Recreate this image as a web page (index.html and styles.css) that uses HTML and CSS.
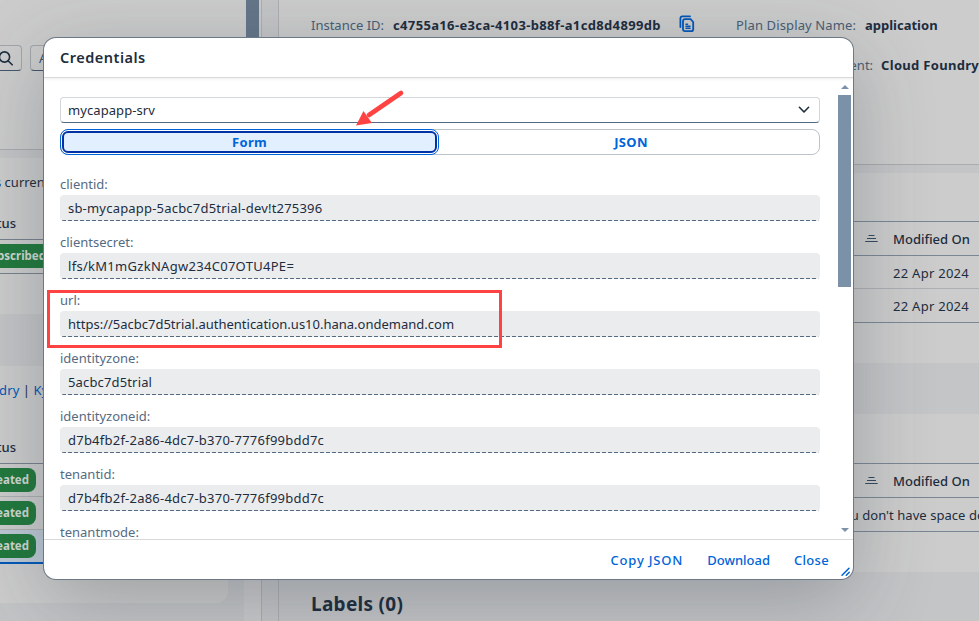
FILE: index.html
```html
<!DOCTYPE html>
<html lang="en">
<head>
<meta charset="utf-8">
<title>Credentials</title>
<link rel="stylesheet" href="styles.css">
</head>
<body>
<div class="app">
  <aside class="list-pane">
    <div class="list-main">
      <div class="filters">
        <div class="search"><svg width="18" height="18" viewBox="0 0 18 18" fill="none" stroke="#1d2d3e" stroke-width="1.6" stroke-linecap="round"><circle cx="7.5" cy="8" r="5.1"/><path d="M11.3 12 15.2 15.8"/></svg></div>
        <div class="filter">All</div>
      </div>
      <section class="list-card subs">
        <p class="info"><span>s currently</span></p>
        <div class="col-head"><span>Status</span></div>
        <div class="sub-row"><span class="tag wide"><b>Subscribed</b></span></div>
      </section>
      <section class="list-card instances">
        <p class="links"><a>Foundry</a> | <a>Kyma</a></p>
        <div class="col-head"><span>Status</span></div>
        <div class="row"><span class="tag"><b>Created</b></span></div>
        <div class="row"><span class="tag"><b>Created</b></span></div>
        <div class="row selected"><span class="tag"><b>Created</b></span></div>
      </section>
    </div>
    <div class="list-track"><div class="list-thumb"></div></div>
  </aside>
  <div class="splitter"></div>
  <main class="detail">
    <header class="detail-head">
      <div class="meta">
        <span class="key k1">Instance ID:</span><strong class="v1">c4755a16-e3ca-4103-b88f-a1cd8d4899db</strong>
        <svg class="copy" width="16" height="18" viewBox="0 0 16 18" fill="none" stroke="#0057b8" stroke-width="1.8" stroke-linecap="round" stroke-linejoin="round"><path d="M1.4 12V3.4q0-2 2-2H11"/><path d="M6 4.2h5.6L14.2 7v7.2q0 2-2 2H6q-2 0-2-2V6.2q0-2 2-2Z"/><path stroke-width="1.5" d="M7 9.2h1.5M7 11.2h4M7 13.3h4"/></svg>
        <span class="key k2">Plan Display Name:</span><strong class="v2">application</strong>
      </div>
      <div class="meta second"><span class="key k3">Environment:</span><strong class="v3">Cloud Foundry</strong></div>
    </header>
    <section class="panel bindings">
      <div class="thead"><svg width="13" height="8" viewBox="0 0 13 8" stroke="#354a5f"><path d="M3.5 .5h6M2 3.5h9M.2 6.5h12.5"/></svg><span>Modified On</span></div>
      <div class="trow"><span>22 Apr 2024</span></div>
      <div class="trow last"><span>22 Apr 2024</span></div>
    </section>
    <section class="panel keys">
      <div class="thead"><svg width="13" height="8" viewBox="0 0 13 8" stroke="#354a5f"><path d="M3.5 .5h6M2 3.5h9M.2 6.5h12.5"/></svg><span>Modified On</span></div>
      <div class="trow empty"><span>You don't have space developer</span></div>
    </section>
    <h2>Labels (0)</h2>
  </main>
</div>

<div class="dialog">
  <header class="title">Credentials</header>
  <div class="body">
    <div class="content">
      <div class="select"><span>mycapapp-srv</span><svg width="12" height="8" viewBox="0 0 12 8" fill="none" stroke="#1d2d3e" stroke-width="1.6" stroke-linecap="round" stroke-linejoin="round"><path d="M1.4 1.3 6 6l4.6-4.7"/></svg></div>
      <div class="segments"><div class="segment active"><span>Form</span></div><div class="segment"><span>JSON</span></div></div>
      <div class="field"><label>clientid:</label><div class="value"><span class="t1">sb-mycapapp-5acbc7d5trial-dev!t275396</span></div></div>
      <div class="field"><label>clientsecret:</label><div class="value"><span class="t2">lfs/kM1mGzkNAgw234C07OTU4PE=</span></div></div>
      <div class="field"><label>url:</label><div class="value"><span class="t3">https://5acbc7d5trial.authentication.us10.hana.ondemand.com</span></div></div>
      <div class="field"><label>identityzone:</label><div class="value"><span class="t4">5acbc7d5trial</span></div></div>
      <div class="field"><label>identityzoneid:</label><div class="value"><span class="t5">d7b4fb2f-2a86-4dc7-b370-7776f99bdd7c</span></div></div>
      <div class="field"><label>tenantid:</label><div class="value"><span class="t5">d7b4fb2f-2a86-4dc7-b370-7776f99bdd7c</span></div></div>
      <div class="field"><label>tenantmode:</label></div>
    </div>
    <div class="scrollbar"><i class="up"></i><div class="thumb"></div><i class="down"></i></div>
  </div>
  <footer><span class="b1">Copy JSON</span><span class="b2">Download</span><span class="b3">Close</span></footer>
  <svg class="grip" width="10" height="10" viewBox="0 0 10 10" stroke="#0064d9" stroke-width="1.5" stroke-linecap="round"><path d="M1 8.3 8 1.2M5.3 8.3l3-3"/></svg>
</div>

<div class="highlight"></div>
<svg class="arrow" width="50" height="38" viewBox="0 0 50 38"><path d="M46 5 14 27" stroke="#ff4343" stroke-width="4.6" stroke-linecap="round"/><path d="M1 37.5 8.5 23 17 35Z" fill="#ff4343"/></svg>
</body>
</html>
```
FILE: styles.css
```css
* { box-sizing: border-box; }
body {
  margin: 0;
  width: 979px;
  height: 621px;
  overflow: hidden;
  position: relative;
  font: 13px/20px "Noto Sans", sans-serif;
  color: #1d2d3e;
}
p, h2 { margin: 0; }
span, strong, label, a { white-space: nowrap; }

/* page behind the dialog */
.app { display: flex; height: 621px; background: #c4c5c7; }
.list-pane { flex: 0 0 261px; display: flex; }
.list-main { flex: 0 0 244px; overflow: hidden; }
.filters {
  display: flex;
  gap: 8px;
  height: 150px;
  padding-top: 45px;
  background: #ccc;
  border-bottom: 1px solid #aaacae;
}
.search, .filter {
  height: 26px;
  border: 1px solid #a2a6ab;
  border-bottom-color: #44566c;
  border-radius: 4px;
}
.search { width: 22px; border-left: 0; border-radius: 0 4px 4px 0; overflow: hidden; display: flex; justify-content: flex-end; padding: 3px 6px 0 0; }
.search svg { flex: none; }
.filter { width: 150px; padding: 2px 8px; color: #354a5f; }
.list-card { width: 228px; background: #ccc; }
.subs { height: 156px; margin-top: 8px; padding-top: 14px; }
.info span { display: block; margin-left: -5px; }
.col-head { width: 228px; border-bottom: 1px solid #77828e; font-weight: 500; }
.col-head span { display: block; width: 16px; direction: rtl; }
.subs .col-head { margin-top: 21px; height: 27px; }
.sub-row { height: 34px; padding-top: 4px; border-bottom: 1px solid #77828e; }
.tag {
  display: flex;
  justify-content: flex-end;
  width: 36px;
  height: 24px;
  padding-right: 7px;
  overflow: hidden;
  border-radius: 0 8px 8px 0;
  background: #21793d;
  color: #d0d8d2;
  font-size: 11.5px;
  line-height: 23px;
}
.tag.wide { width: 60px; padding-right: 14px; }
.instances { height: 237px; margin-top: 52px; padding-top: 14px; border-radius: 0 0 12px 0; }
.links { margin-left: -32px; letter-spacing: .1px; }
.links a { color: #0057b8; }
.instances .col-head { margin-top: 37px; height: 27px; }
.row { height: 33px; padding-top: 4px; border-bottom: 1px solid #adb0b3; }
.row.selected { height: 34px; background: #bdc9d5; border-bottom: 2px solid #0057b8; }
.list-track { width: 17px; padding-left: 2px; background: #cbcbcc; }
.list-thumb { width: 13px; height: 300px; background: #647689; }
.splitter { flex: 0 0 18px; border: solid #adafb1; border-width: 0 1px; background: #c4c5c7; }
.detail { flex: 1; min-width: 0; overflow: hidden; }
.detail-head { height: 165px; padding: 15px 0 0 32px; background: #ccc; border-bottom: 1px solid #a9abad; }
.meta { display: flex; height: 20px; }
.meta.second { margin-top: 20px; justify-content: flex-end; }
.key { color: #475e75; }
.copy { margin: 0 41px 0 18px; flex: none; }
.k1 { width: 82px; }
.v1 { width: 268px; letter-spacing: .35px; }
.k2 { width: 129px; letter-spacing: .13px; }
.k3 { margin-right: 8px; }
.v3 { letter-spacing: .3px; }
.panel { background: #ccc; }
.bindings { height: 190px; margin-top: 8px; padding-top: 48px; }
.keys { height: 158px; margin-top: 51px; padding-top: 49px; }
.thead {
  display: flex;
  align-items: center;
  height: 35px;
  padding-left: 586px;
  border: solid #7b8794;
  border-width: 1px 0;
  font-weight: 500;
}
.thead svg { margin-right: 15px; flex: none; }
.trow { height: 33px; padding: 7px 0 0 614px; border-bottom: 1px solid #adb0b3; letter-spacing: .27px; }
.trow.last { height: 34px; border-color: #7b8794; }
.trow.empty { height: 34px; padding-left: 557px; border-color: #7b8794; letter-spacing: .05px; }
h2 { padding: 20px 0 0 32px; font: bold 19px/24px "Noto Sans", sans-serif; letter-spacing: .3px; }

/* dialog */
.dialog {
  position: absolute;
  left: 44px;
  top: 38px;
  width: 809px;
  height: 541px;
  display: flex;
  flex-direction: column;
  overflow: hidden;
  border-radius: 12px;
  background: #fff;
  box-shadow: 0 0 0 1px #6c7885, 0 20px 80px rgba(42, 52, 62, .3);
}
.title { position: relative; height: 40px; padding: 9px 16px; border-bottom: 1px solid #d9d9d9; font-size: 14.5px; font-weight: 600; letter-spacing: .5px; box-shadow: 0 1px 3px rgba(0, 0, 0, .08); }
.body { display: flex; height: 461px; overflow: hidden; }
.content { flex: 0 0 792px; padding: 19px 16px 0; }
.select {
  display: flex;
  align-items: center;
  justify-content: space-between;
  height: 26px;
  padding: 0 9px 0 7px;
  border: 1px solid #d3d6da;
  border-bottom-color: #556b82;
  border-radius: 4px;
  letter-spacing: .08px;
}
.segments { display: flex; height: 26px; margin: 6px 0 19px; border: 1px solid #bcc3ca; border-radius: 8px; font-weight: 700; color: #0064d9; text-align: center; line-height: 24px; letter-spacing: .3px; }
.segment { flex: 1; padding-left: 4px; }
.segment.active {
  flex: 0 0 379px;
  height: 26px;
  margin: -1px 0 0 -1px;
  border: 1px solid #0064d9;
  border-radius: 8px;
  padding: 1px;
}
.active span { display: block; height: 22px; border: 2px solid #0032a5; border-radius: 6px; background: #e1efff; line-height: 18px; }
.field { height: 58px; }
.field label { display: block; height: 21px; color: #556b82; }
.value {
  height: 26px;
  padding: 3px 8px;
  border-radius: 4px;
  background: linear-gradient(90deg, #556b82 4px, transparent 4px) 2px 100% / 6px 1px repeat-x #ebecee;
}
.t1 { letter-spacing: .2px; }
.t2 { letter-spacing: .29px; }
.t4 { letter-spacing: .15px; }
.t5 { letter-spacing: .23px; }
.scrollbar { display: flex; flex-direction: column; align-items: center; width: 17px; padding: 7px 0; }
.up, .down { border: solid transparent; border-width: 0 4px; }
.up { border-bottom: 4px solid #7b91a8; }
.down { border-top: 4px solid #7b91a8; margin-top: auto; }
.thumb { width: 13px; height: 192px; margin-top: 6px; background: #7b91a8; }
footer { display: flex; height: 40px; padding: 10px 24px; justify-content: flex-end; gap: 24px; border-top: 1px solid #d9d9d9; color: #0064d9; font-weight: 500; }
.b1 { letter-spacing: .8px; }
.b3 { letter-spacing: .3px; }
.grip { position: absolute; right: 2px; bottom: 2px; }

/* annotations */
.highlight { position: absolute; left: 47px; top: 290px; width: 455px; height: 58px; border: 3px solid #ff4343; }
.arrow { position: absolute; left: 355px; top: 88px; }
```
